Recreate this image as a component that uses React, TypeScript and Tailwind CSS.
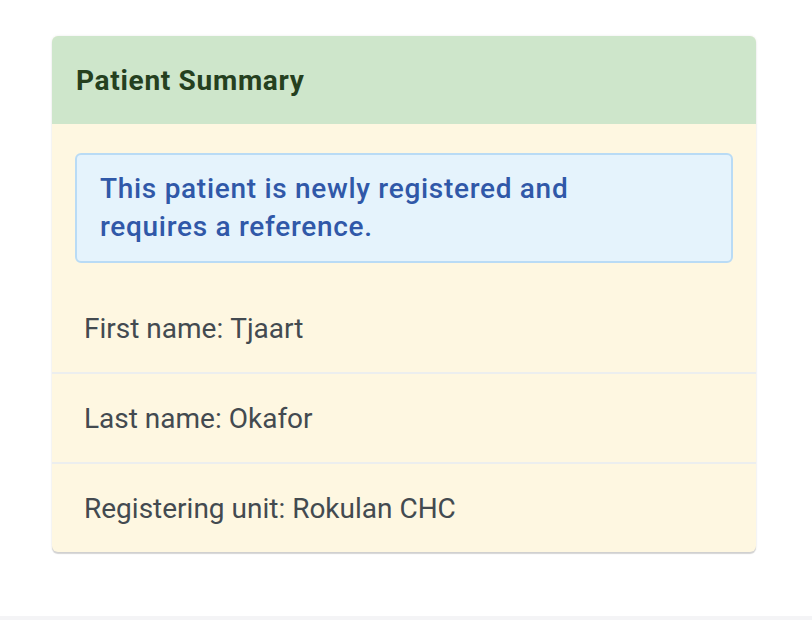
const details = [
  { label: "First name", value: "Tjaart" },
  { label: "Last name", value: "Okafor" },
  { label: "Registering unit", value: "Rokulan CHC" },
];

export default function App() {
  return (
    <div className="flex min-h-screen flex-col bg-white font-['Roboto',sans-serif] text-[28px] text-[#434a50]">
      <main className="grow pt-9 pr-14 pb-16 pl-13">
        <section className="rounded-md bg-[#fef7e1] shadow-[0_2px_1px_rgba(0,0,0,0.16),0_0_3px_rgba(0,0,0,0.08)]">
          <h1 className="rounded-t-md bg-[#cee6cb] px-6 pt-[25px] pb-[23px] leading-10 font-bold tracking-wide text-[#25401f]">
            Patient Summary
          </h1>
          <div className="px-[23px] pt-[29px] pb-[21px]">
            <p className="rounded-md border-2 border-[#b9dbf5] bg-[#e5f3fc] py-[15px] pr-32 pl-[23px] leading-[38px] font-medium tracking-wide text-[#3058a8]">
              This patient is newly registered and requires a reference.
            </p>
          </div>
          <dl className="divide-y-2 divide-[#eceeee] leading-10">
            {details.map((d) => (
              <div key={d.label} className="px-8 pt-[25px] pb-[23px]">
                <dt className="inline">{d.label}:</dt>{" "}
                <dd className="inline">{d.value}</dd>
              </div>
            ))}
          </dl>
        </section>
      </main>
      <footer className="h-1 bg-[#f4f4f6]" />
    </div>
  );
}
